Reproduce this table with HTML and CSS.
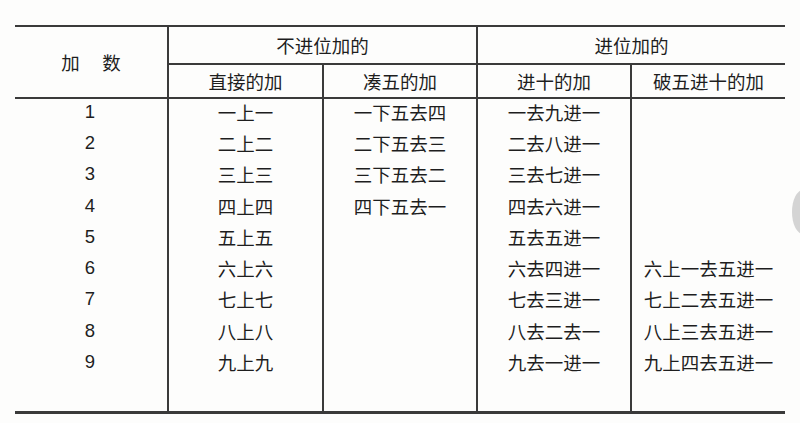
FILE: index.html
```html
<!DOCTYPE html>
<html lang="zh-CN">
<head>
<meta charset="utf-8">
<title>珠算加法口诀表</title>
<link rel="stylesheet" href="styles.css">
</head>
<body>
<div class="page">
  <table class="abacus">
    <colgroup>
      <col class="c1"><col class="c2"><col class="c3"><col class="c4"><col class="c5">
    </colgroup>
    <thead>
      <tr class="h1">
        <th rowspan="2" class="addend">加　数</th>
        <th colspan="2">不进位加的</th>
        <th colspan="2">进位加的</th>
      </tr>
      <tr class="h2">
        <th>直接的加</th>
        <th>凑五的加</th>
        <th>进十的加</th>
        <th>破五进十的加</th>
      </tr>
    </thead>
    <tbody>
      <tr><td class="num">1</td><td>一上一</td><td>一下五去四</td><td>一去九进一</td><td></td></tr>
      <tr><td class="num">2</td><td>二上二</td><td>二下五去三</td><td>二去八进一</td><td></td></tr>
      <tr><td class="num">3</td><td>三上三</td><td>三下五去二</td><td>三去七进一</td><td></td></tr>
      <tr><td class="num">4</td><td>四上四</td><td>四下五去一</td><td>四去六进一</td><td></td></tr>
      <tr><td class="num">5</td><td>五上五</td><td></td><td>五去五进一</td><td></td></tr>
      <tr><td class="num">6</td><td>六上六</td><td></td><td>六去四进一</td><td>六上一去五进一</td></tr>
      <tr><td class="num">7</td><td>七上七</td><td></td><td>七去三进一</td><td>七上二去五进一</td></tr>
      <tr><td class="num">8</td><td>八上八</td><td></td><td>八去二去一</td><td>八上三去五进一</td></tr>
      <tr><td class="num">9</td><td>九上九</td><td></td><td>九去一进一</td><td>九上四去五进一</td></tr>
      <tr class="filler"><td></td><td></td><td></td><td></td><td></td></tr>
    </tbody>
  </table>
  <div class="scroll-knob"></div>
</div>
</body>
</html>
```

FILE: styles.css
```css
html, body {
  margin: 0;
  padding: 0;
  background: #fdfdfc;
}

.page {
  position: relative;
  width: 800px;
  height: 423px;
  overflow: hidden;
  padding: 25px 0 0 15px;
  box-sizing: border-box;
}

.abacus {
  width: 770px;
  table-layout: fixed;
  border-collapse: collapse;
  font-family: "Noto Sans CJK SC", "Noto Sans", sans-serif;
  font-size: 18.5px;
  color: #1e1e1e;
  line-height: 1;
  border-top: 2px solid #3a3a3a;
  border-bottom: 3px solid #3a3a3a;
}

.c1 { width: 153px; }
.c2 { width: 155px; }
.c3 { width: 154px; }
.c4 { width: 154px; }
.c5 { width: 154px; }

.abacus th,
.abacus td {
  padding: 0;
  text-align: center;
  vertical-align: middle;
  font-weight: 400;
  white-space: nowrap;
}

.abacus th + th,
.abacus td + td,
.abacus .h2 th {
  border-left: 2px solid #3a3a3a;
}

.h1 th {
  height: 36px;
  border-bottom: 2px solid #3a3a3a;
}

.h1 th.addend {
  letter-spacing: 2px;
  text-indent: 2px;
}

.h2 th {
  height: 31px;
  border-bottom: 2px solid #3a3a3a;
  padding-top: 1px;
}

.abacus tbody td {
  height: 31.25px;
  padding-bottom: 3px;
  box-sizing: border-box;
}

.abacus td.num {
  font-family: "Liberation Sans", "DejaVu Sans", sans-serif;
  font-size: 18.5px;
  padding-right: 2px;
}

.abacus tbody tr.filler td {
  height: 33px;
}

.scroll-knob {
  position: absolute;
  right: -14px;
  top: 190px;
  width: 22px;
  height: 44px;
  border-radius: 50%;
  background: #d4d4d4;
}
```
